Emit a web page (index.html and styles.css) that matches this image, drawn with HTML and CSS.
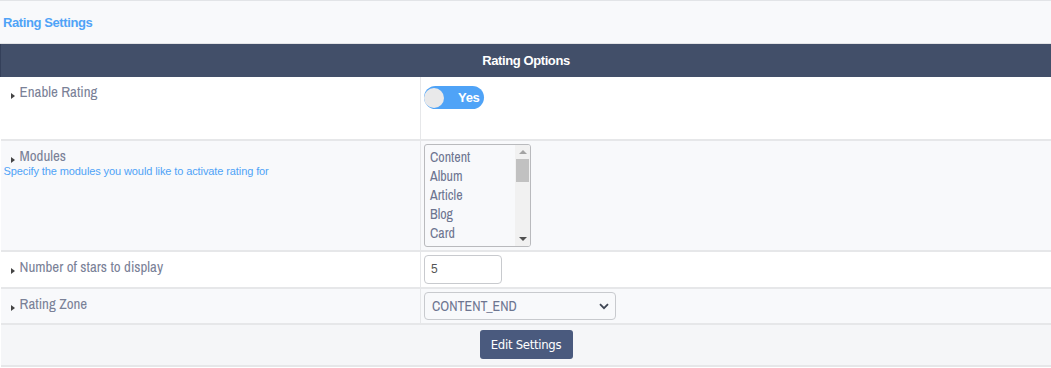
FILE: index.html
```html
<!DOCTYPE html>
<html>
<head>
<meta charset="utf-8">
<link rel="stylesheet" href="styles.css">
</head>
<body>
<div class="panel">
  <div class="panel-head">Rating Settings</div>
  <table class="settings">
    <tr class="caption-row"><th colspan="2">Rating Options</th></tr>
    <tr class="row r-enable">
      <td class="label-cell"><span class="label"><span class="arrow"></span>Enable Rating</span></td>
      <td class="ctrl-cell">
        <label class="toggle"><span class="knob"></span><span class="toggle-text">Yes</span></label>
      </td>
    </tr>
    <tr class="row alt r-modules">
      <td class="label-cell"><span class="label"><span class="arrow"></span>Modules</span>
        <div class="desc">Specify the modules you would like to activate rating for</div></td>
      <td class="ctrl-cell">
        <div class="listbox">
          <ul class="options">
            <li>Content</li><li>Album</li><li>Article</li><li>Blog</li><li>Card</li>
          </ul>
          <div class="scrollbar">
            <span class="sb-up"></span>
            <span class="sb-thumb"></span>
            <span class="sb-down"></span>
          </div>
        </div>
      </td>
    </tr>
    <tr class="row r-stars">
      <td class="label-cell"><span class="label"><span class="arrow"></span>Number of stars to display</span></td>
      <td class="ctrl-cell"><div class="textbox">5</div></td>
    </tr>
    <tr class="row alt r-zone">
      <td class="label-cell"><span class="label"><span class="arrow"></span>Rating Zone</span></td>
      <td class="ctrl-cell">
        <div class="dropdown"><span>CONTENT_END</span>
          <svg class="chev" width="10" height="7" viewBox="0 0 10 7"><path d="M1 1.2 L5 5.2 L9 1.2" fill="none" stroke="#3f4654" stroke-width="1.8"/></svg>
        </div>
      </td>
    </tr>
    <tr class="row foot">
      <td colspan="2"><button class="btn">Edit Settings</button></td>
    </tr>
  </table>
</div>
</body>
</html>
```

FILE: styles.css
```css
* { box-sizing: border-box; }
html, body { margin: 0; padding: 0; background: #fff; }
body {
  font-family: "Liberation Sans Narrow", "Archivo Narrow", "DejaVu Sans Condensed", "Liberation Sans", sans-serif;
  color: #7a8197;
}
.panel {
  width: 1051px;
  border-top: 1px solid #e2e4e7;
}
.panel-head {
  height: 43px;
  background: #f8f9fb;
  border-bottom: 1px solid #e3e4e6;
  color: #4fa3f7;
  font-family: "Liberation Sans", sans-serif;
  font-weight: bold;
  font-size: 13px;
  letter-spacing: -0.4px;
  padding: 14px 0 0 3px;
}
.settings {
  width: 1051px;
  border-collapse: collapse;
  border-spacing: 0;
}
.caption-row th {
  height: 33px;
  background: #424f69;
  border-left: 1px solid #34405a;
  color: #fff;
  font-family: "Liberation Sans", sans-serif;
  font-weight: bold;
  font-size: 13px;
  letter-spacing: -0.4px;
  text-align: center;
  padding: 0 0 1px 0;
}
.row td {
  border-bottom: 2px solid #e6e7e9;
  vertical-align: top;
  background: #fff;
  padding: 0;
}
.row.alt td { background: #f8f9fb; }
.label-cell {
  width: 420px;
  border-right: 1px solid #e6e7e9;
  padding-left: 0;
}
.label {
  display: flex;
  align-items: flex-end;
  font-size: 15px;
  line-height: 16px;
  color: #7a8197;
  padding: 7px 0 0 10px;
}
.arrow {
  display: inline-block;
  width: 0; height: 0;
  border-top: 3px solid transparent;
  border-bottom: 3px solid transparent;
  border-left: 4px solid #444;
  margin: 0 5px 1px 0;
}
.desc {
  font-family: "Liberation Sans", sans-serif;
  font-size: 11px;
  letter-spacing: -0.1px;
  color: #4fa3f7;
  padding: 1px 0 0 3px;
}
.ctrl-cell { padding-left: 3px !important; }

.r-enable td { height: 63px; }
.r-modules td { height: 111px; }
.r-stars td { height: 37px; }
.r-zone td { height: 36px; }
.foot td { height: 42px; background: #f5f6f8 !important; text-align: left; padding-left: 479px !important; }

.toggle {
  display: flex;
  align-items: center;
  position: relative;
  width: 60px;
  height: 23px;
  margin-top: 9px;
  border-radius: 12px;
  background: #4fa3f7;
}
.knob {
  position: absolute;
  left: 0; top: 2px;
  width: 20px; height: 20px;
  border-radius: 50%;
  background: #e9e9ea;
}
.toggle-text {
  margin-left: 34px;
  color: #fff;
  font-family: "Liberation Sans", sans-serif;
  font-weight: bold;
  font-size: 13px;
  letter-spacing: -0.3px;
}
.listbox {
  display: flex;
  width: 107px;
  height: 103px;
  margin-top: 3px;
  border: 1px solid #b9babd;
  border-radius: 3px;
  background: #f8f9fb;
  overflow: hidden;
}
.options {
  list-style: none;
  margin: 0;
  padding: 3px 0 0 5px;
  flex: 1;
  font-size: 14px;
  line-height: 19px;
  color: #6d7590;
}
.scrollbar {
  width: 15px;
  background: #f1f1f1;
  display: flex;
  flex-direction: column;
  align-items: center;
  position: relative;
}
.sb-up {
  margin-top: 5px;
  width: 0; height: 0;
  border-left: 4px solid transparent;
  border-right: 4px solid transparent;
  border-bottom: 4px solid #a3a3a3;
}
.sb-thumb {
  margin-top: 5px;
  width: 13px;
  height: 23px;
  background: #c1c1c1;
}
.sb-down {
  position: absolute;
  bottom: 5px;
  width: 0; height: 0;
  border-left: 4px solid transparent;
  border-right: 4px solid transparent;
  border-top: 4px solid #505050;
}
.textbox {
  width: 78px;
  height: 29px;
  margin-top: 3px;
  border: 1px solid #c8cace;
  border-radius: 4px;
  background: #fff;
  font-family: "Liberation Sans", sans-serif;
  font-size: 12px;
  color: #555;
  padding: 6px 0 0 6px;
}
.dropdown {
  display: flex;
  align-items: center;
  justify-content: space-between;
  width: 192px;
  height: 28px;
  margin-top: 3px;
  border: 1px solid #c8cace;
  border-radius: 4px;
  background: #f8f9fb;
  font-size: 14px;
  color: #6d7590;
  padding: 0 6px 0 7px;
}
.btn {
  display: block;
  margin-top: 5px;
  width: 93px;
  height: 29px;
  border: none;
  border-radius: 3px;
  background: #4a5a7e;
  color: #fff;
  font-family: "Liberation Sans Narrow", "DejaVu Sans Condensed", "Liberation Sans", sans-serif;
  font-size: 13px;
  letter-spacing: -0.3px;
  padding: 0;
}
```
